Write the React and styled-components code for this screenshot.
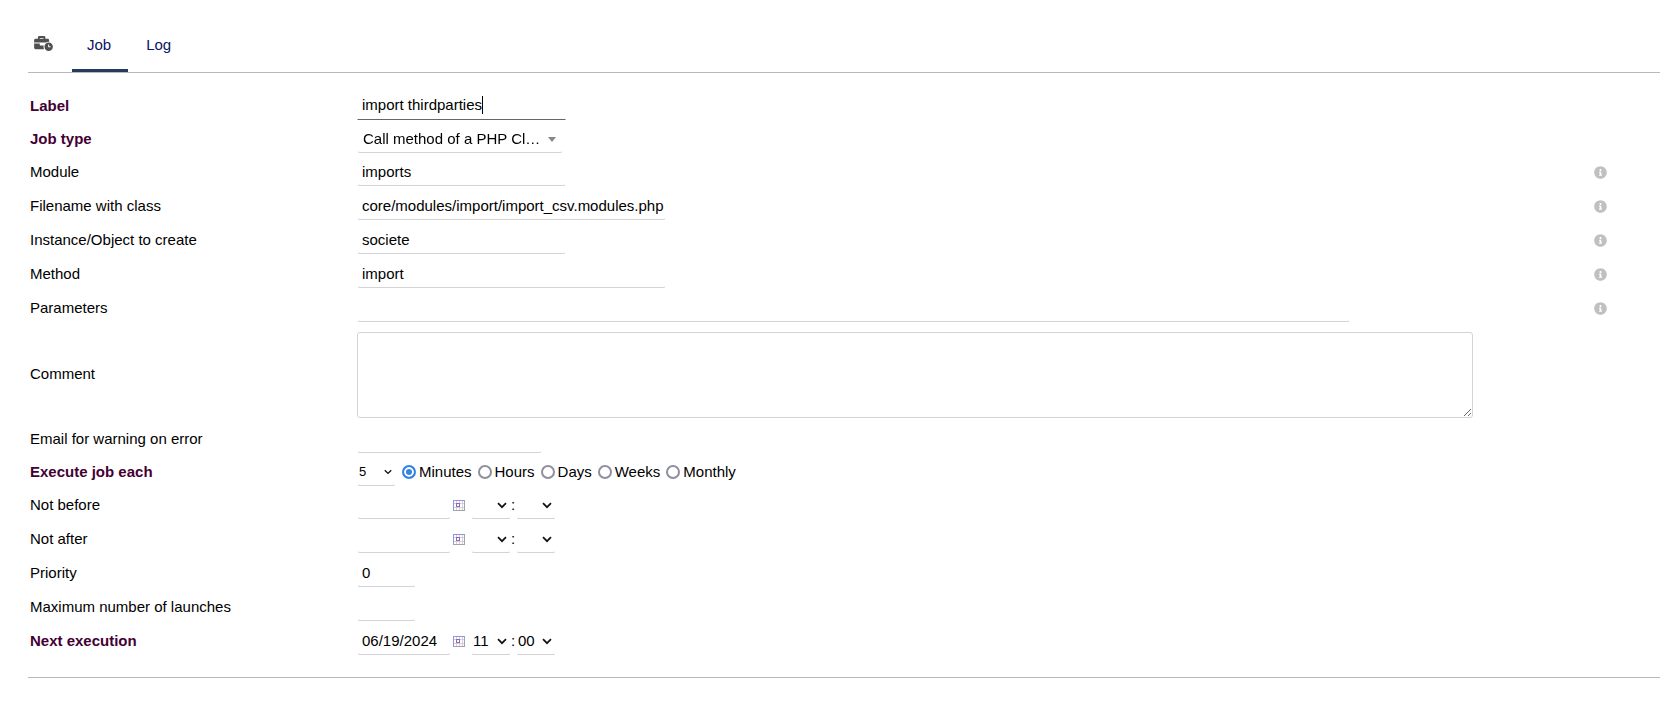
import styled, { createGlobalStyle, css } from 'styled-components';
import { useEffect, useRef, useState } from 'react';
import { FaBusinessTime, FaInfoCircle } from 'react-icons/fa';

const COLORS = {
  text: '#000',
  required: '#440033',
  tab: '#0a1464',
  tabActive: '#263c5c',
  line: '#b8b8b8',
  field: '#d4d4d8',
  fieldFocus: '#666',
  icon: '#505050',
  info: '#c0c0c0',
  radio: '#8f8f9d',
  radioOn: '#3584e4',
}

const UNITS = ['Minutes', 'Hours', 'Days', 'Weeks', 'Monthly']

export default function CronJobPage() {
  const [unit, setUnit] = useState('Minutes')

  return (
    <>
      <GlobalStyle />
      <Page>
        <Tabs>
          <TabIcon><FaBusinessTime size={15} /></TabIcon>
          <Tab href="#job" $active>Job</Tab>
          <Tab href="#log">Log</Tab>
        </Tabs>
        <Form onSubmit={(e) => e.preventDefault()}>
          <Row $height={33}>
            <Name htmlFor="label" $required>Label</Name>
            <LabelField />
          </Row>
          <Row $height={33}>
            <Name htmlFor="jobtype" $required>Job type</Name>
            <TypeBox>
              <TypeSelect id="jobtype">
                <option>Call method of a PHP Class</option>
                <option>Shell command</option>
              </TypeSelect>
              <Triangle />
            </TypeBox>
          </Row>
          <Row>
            <Name htmlFor="module">Module</Name>
            <Input id="module" $width="209px" defaultValue="imports" />
            <Info />
          </Row>
          <Row>
            <Name htmlFor="classfile">Filename with class</Name>
            <Input id="classfile" $width="309px" defaultValue="core/modules/import/import_csv.modules.php" />
            <Info />
          </Row>
          <Row>
            <Name htmlFor="object">Instance/Object to create</Name>
            <Input id="object" $width="209px" defaultValue="societe" />
            <Info />
          </Row>
          <Row>
            <Name htmlFor="method">Method</Name>
            <Input id="method" $width="309px" defaultValue="import" />
            <Info />
          </Row>
          <Row>
            <Name htmlFor="params">Parameters</Name>
            <Input id="params" $width="calc(80% + 4px)" />
            <Info />
          </Row>
          <Row $height={97}>
            <Name htmlFor="comment">Comment</Name>
            <TextArea id="comment" />
          </Row>
          <Row $height={33}>
            <Name htmlFor="email">Email for warning on error</Name>
            <Input id="email" $width="185px" />
          </Row>
          <Row $height={33}>
            <Name htmlFor="frequency" $required>Execute job each</Name>
            <Units>
              <Select id="frequency" value="5" options={['5', '10', '15', '30']} small />
              {UNITS.map((name) => (
                <RadioLabel key={name}>
                  <Radio name="unit" checked={unit === name} onChange={() => setUnit(name)} />
                  {name}
                </RadioLabel>
              ))}
            </Units>
          </Row>
          <Row>
            <Name htmlFor="before">Not before</Name>
            <DateFields id="before" />
          </Row>
          <Row>
            <Name htmlFor="after">Not after</Name>
            <DateFields id="after" />
          </Row>
          <Row>
            <Name htmlFor="priority">Priority</Name>
            <Input id="priority" $width="59px" defaultValue="0" />
          </Row>
          <Row>
            <Name htmlFor="maxrun">Maximum number of launches</Name>
            <Input id="maxrun" $width="59px" />
          </Row>
          <Row>
            <Name htmlFor="next" $required>Next execution</Name>
            <DateFields id="next" date="06/19/2024" hour="11" minute="00" />
          </Row>
        </Form>
      </Page>
    </>
  )
}

// focused on load, with its own steady caret after the typed text
function LabelField() {
  const [text, setText] = useState('import thirdparties')
  const [focused, setFocused] = useState(false)
  const [caret, setCaret] = useState(0)
  const ref = useRef(null)

  useEffect(() => {
    ref.current.focus()
    ref.current.setSelectionRange(text.length, text.length)
    placeCaret()
  }, [])

  const placeCaret = () => {
    const el = ref.current
    const ctx = document.createElement('canvas').getContext('2d')
    ctx.font = getComputedStyle(el).font
    setCaret(Math.round(ctx.measureText(el.value.slice(0, el.selectionEnd)).width))
  }

  return (
    <LabelBox>
      <Input
        id="label"
        ref={ref}
        $width="100%"
        value={text}
        onChange={(e) => setText(e.target.value)}
        onSelect={placeCaret}
        onFocus={() => setFocused(true)}
        onBlur={() => setFocused(false)}
      />
      {focused && <Caret style={{ marginLeft: caret }} />}
    </LabelBox>
  )
}

function Info() {
  return (
    <InfoButton type="button" aria-label="Help">
      <FaInfoCircle size={13} />
    </InfoButton>
  )
}

function Select({ id, value, options, small, label }) {
  return (
    <SelectBox $small={small}>
      <select id={id} aria-label={label} defaultValue={value}>
        {options.map((o) => <option key={o} value={o}>{o}</option>)}
      </select>
      <svg width={small ? 8 : 10} height={small ? 6 : 7} viewBox="0 0 10 7" aria-hidden="true">
        <path d="M1 1.2 5 5.2 9 1.2" fill="none" stroke="#111" strokeWidth="1.7" />
      </svg>
    </SelectBox>
  )
}

function DateFields({ id, date, hour = '', minute = '' }) {
  return (
    <DateRow>
      <Input id={id} $width="94px" defaultValue={date} />
      <CalendarButton type="button" aria-label="Pick a date">
        <svg width="12" height="11" viewBox="0 0 12 11" shapeRendering="crispEdges">
          <path d="M0 0h12v11H0z" fill="#fff" />
          <path d="M1 3.5h10M1 7.5h10M3.5 1v9M6.5 1v9M9.5 1v9" stroke="#d0d0d8" />
          <path d="M11.5 1v10M0 10.5h12" stroke="#a4a4a8" />
          <path d="M0 .5h12M.5 0v10" stroke="#9393e6" />
          <path d="M3.5 3.5h3v3h-3z" fill="#fff" stroke="#9c63b8" />
        </svg>
      </CalendarButton>
      <Select label="Hour" value={hour} options={[hour, '12']} />
      <Colon>:</Colon>
      <Select label="Minute" value={minute} options={[minute, '30']} />
    </DateRow>
  )
}

const GlobalStyle = createGlobalStyle`
  body {
    margin: 0;
    background: #fff;
  }
  body, input, select, textarea, button {
    font-family: "Liberation Sans", Arial, sans-serif;
    font-size: 15px;
    color: ${COLORS.text};
  }
  * {
    box-sizing: border-box;
  }
`

const Page = styled.main`
  padding: 17px 0 24px 28px;
`

const Tabs = styled.nav`
  display: flex;
  gap: 3px;
  height: 56px;
  border-bottom: 1px solid ${COLORS.line};
`

const TabIcon = styled.span`
  width: 41px;
  padding: 19px 0 0 6px;
  color: ${COLORS.icon};
  svg {
    display: block;
    width: 19px;
  }
`

const Tab = styled.a`
  padding: 19px 17px 0 15px;
  line-height: 18px;
  color: ${COLORS.tab};
  text-decoration: none;
  border-bottom: 3px solid ${props => props.$active ? COLORS.tabActive : 'transparent'};
  border-radius: 2px 2px 0 0;
`

const Form = styled.form`
  padding: 16px 0 19px;
  border-bottom: 1px solid ${COLORS.line};
`

const Row = styled.div`
  display: grid;
  grid-template-columns: minmax(180px, 327px) 1fr 67px;
  align-items: center;
  min-height: ${props => props.$height || 34}px;
  padding-left: 2px;
`

const Name = styled.label`
  line-height: 18px;
  ${props => props.$required && css`
    font-weight: bold;
    color: ${COLORS.required};
  `}
`

const underline = css`
  border: 1px solid transparent;
  border-bottom-color: ${COLORS.field};
  border-radius: 3px;
  background: none;
  outline: none;
`

const Input = styled.input`
  ${underline}
  width: ${props => props.$width};
  height: 28px;
  padding: 0 0 1px 4px;
  &:focus {
    border-bottom-color: ${COLORS.fieldFocus};
    border-radius: 0;
  }
`

const LabelBox = styled.div`
  position: relative;
  display: flex;
  width: 209px;
  input {
    padding-bottom: 3px;
    caret-color: transparent;
  }
`

const Caret = styled.i`
  position: absolute;
  top: 4px;
  left: 5px;
  width: 1px;
  height: 18px;
  background: ${COLORS.text};
  pointer-events: none;
`

const TypeBox = styled.div`
  position: relative;
  width: 206px;
`

const TypeSelect = styled.select`
  ${underline}
  appearance: none;
  display: block;
  width: 100%;
  height: 28px;
  padding: 0 20px 0 5px;
  text-overflow: ellipsis;
`

const Triangle = styled.i`
  position: absolute;
  top: 12px;
  right: 7px;
  border: 4px solid transparent;
  border-top: 5px solid #888;
  border-bottom: 0;
  pointer-events: none;
`

const TextArea = styled.textarea`
  display: block;
  width: calc(90% + 4px);
  height: 86px;
  margin-top: 3px;
  padding: 4px;
  border: 1px solid ${COLORS.field};
  border-radius: 3px;
  outline: none;
  resize: both;
`

const InfoButton = styled.button`
  display: flex;
  justify-self: start;
  padding: 1px 0 0 1px;
  border: none;
  background: none;
  color: ${COLORS.info};
`

const Units = styled.div`
  display: flex;
  align-items: center;
  gap: 6px;
`

const RadioLabel = styled.label`
  display: flex;
  align-items: center;
  gap: 3px;
  line-height: 18px;
`

const Radio = styled.input.attrs({ type: 'radio' })`
  appearance: none;
  width: 14px;
  height: 14px;
  margin: 0;
  border: 2px solid ${COLORS.radio};
  border-radius: 50%;
  &:checked {
    border-color: ${COLORS.radioOn};
    background: ${COLORS.radioOn};
    box-shadow: inset 0 0 0 2px #fff;
  }
`

const SelectBox = styled.span`
  position: relative;
  width: ${props => props.$small ? 39 : 40}px;
  select {
    ${underline}
    appearance: none;
    display: block;
    width: 100%;
    height: 28px;
    padding: 0 12px 1px 1px;
    font-size: ${props => props.$small ? 13 : 15}px;
  }
  svg {
    position: absolute;
    top: 11px;
    right: 4px;
    pointer-events: none;
  }
`

const DateRow = styled.div`
  display: flex;
  align-items: center;
`

const CalendarButton = styled.button`
  display: flex;
  margin: 0 6px 0 2px;
  padding: 0;
  border: none;
  background: none;
`

const Colon = styled.span`
  width: 5px;
  line-height: 18px;
`
